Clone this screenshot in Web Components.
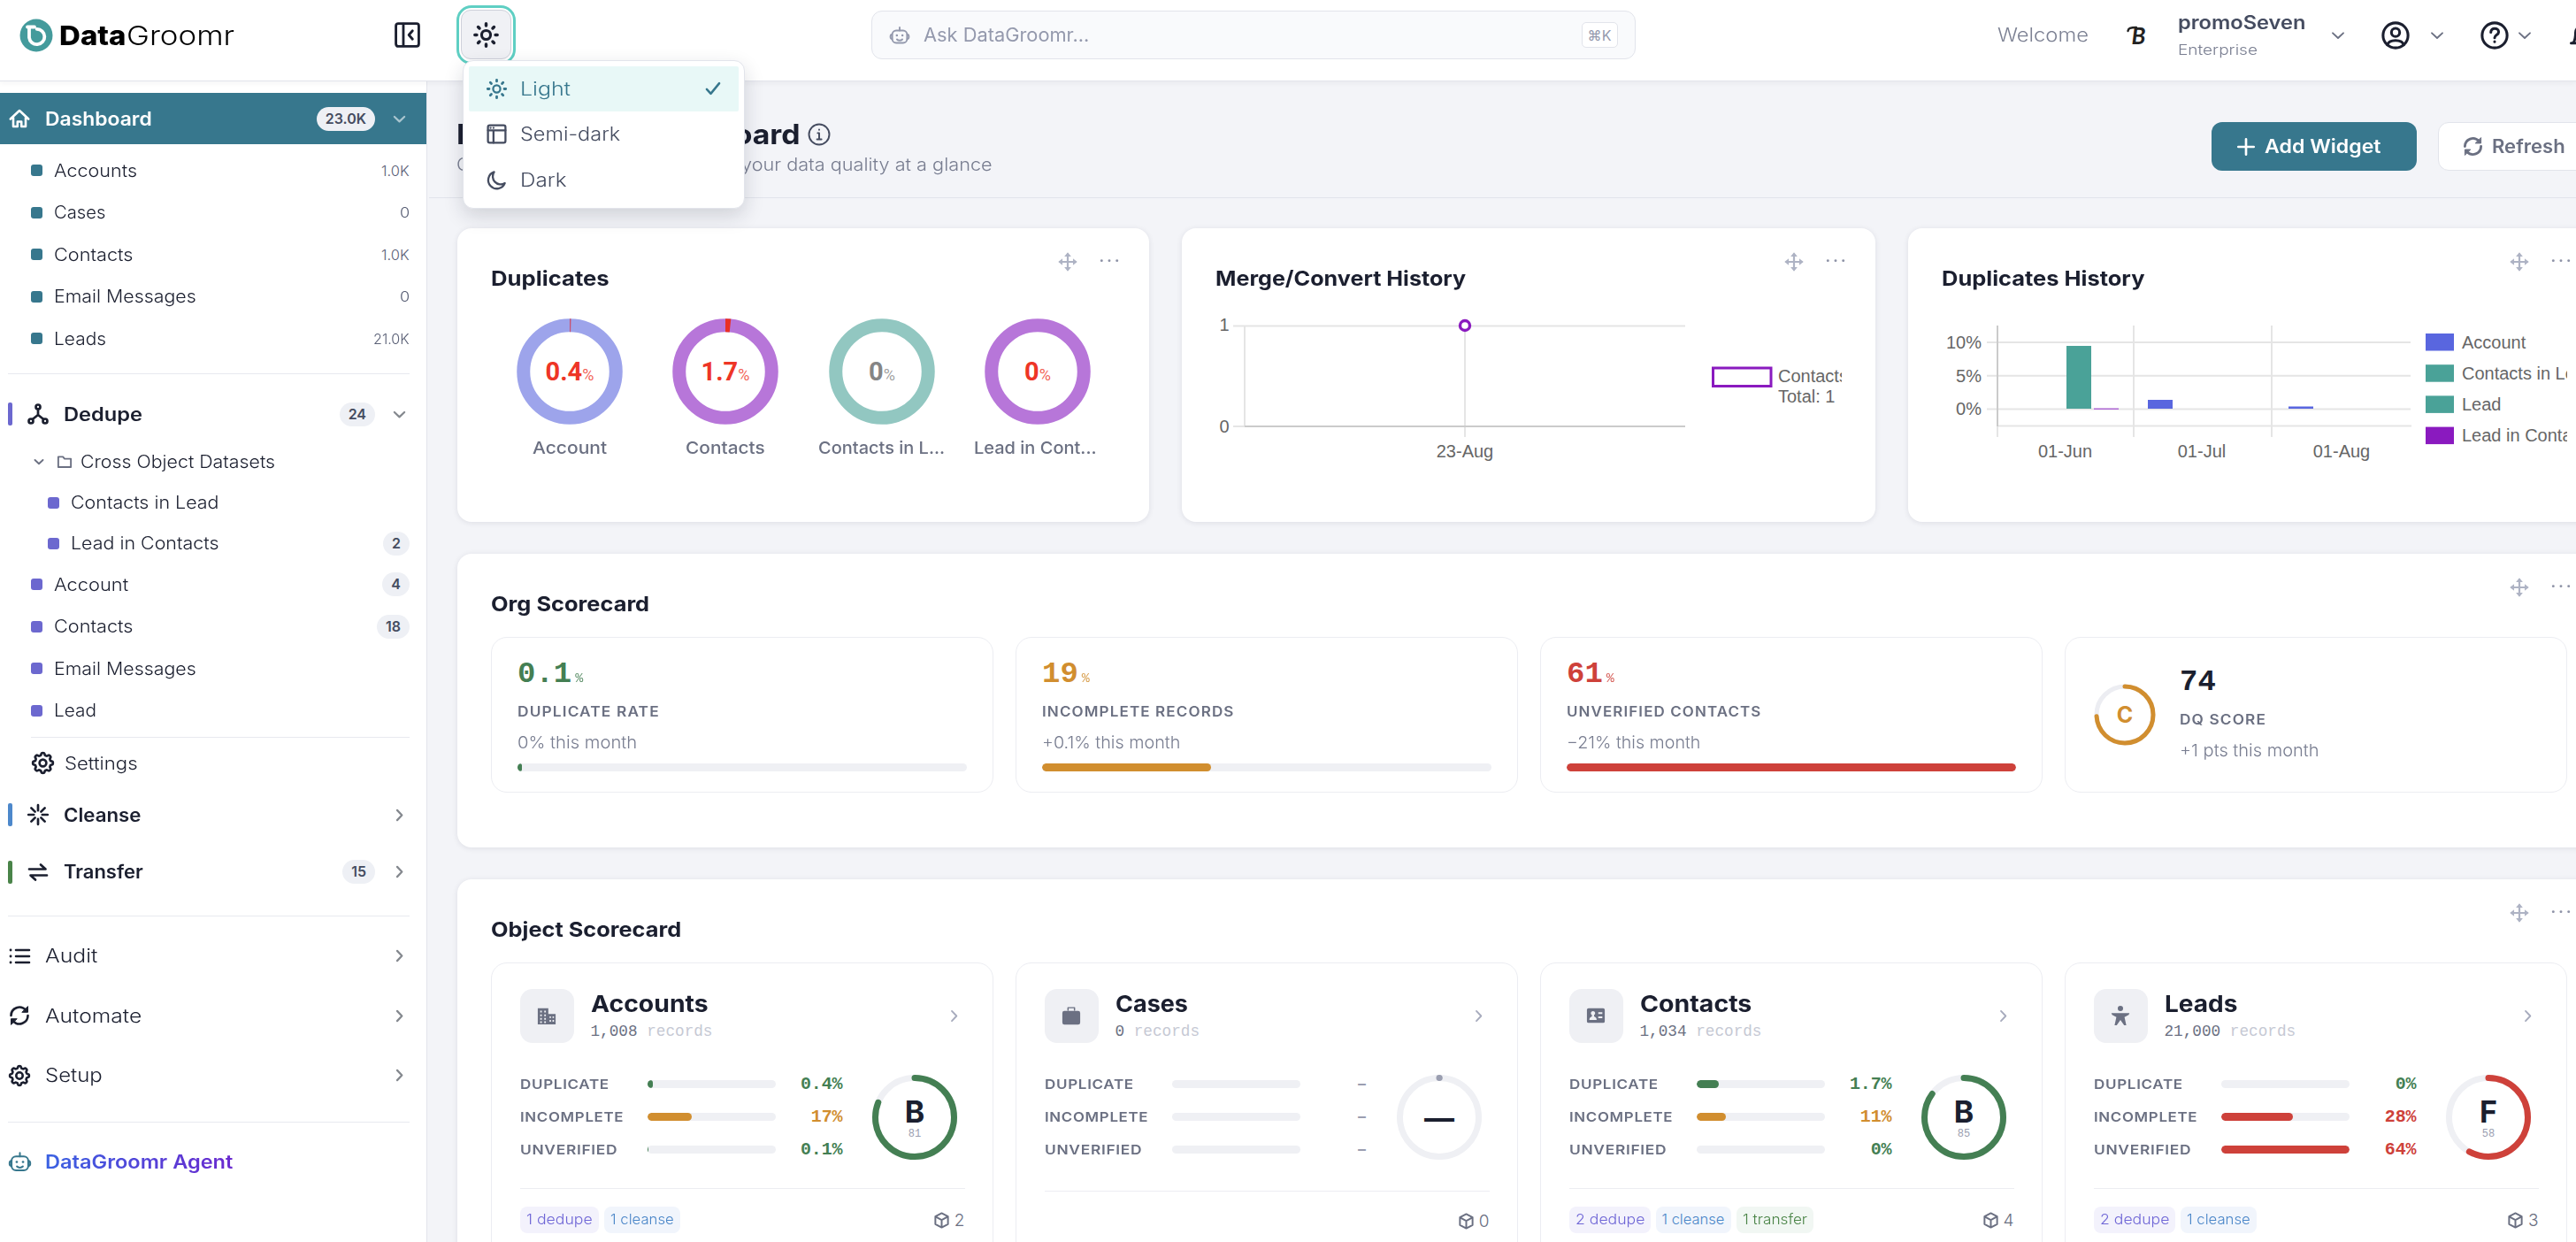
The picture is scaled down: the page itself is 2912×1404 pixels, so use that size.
<!DOCTYPE html>
<html lang="en">
<head>
<meta charset="utf-8">
<title>DataGroomr Dashboard</title>
<style>
  :root {
    --ink: #1b1f2f;
    --slate: #454c60;
    --muted: #6b7082;
    --soft: #787d90;
    --line: #e2e4eb;
    --pill: #eff0f4;
    --teal: #37778d;
    --violet: #6c68cf;
    --green: #447f53;
    --amber: #d18e2f;
    --red: #ce413a;
    --mono: "Liberation Mono", monospace;
  }
  html, body {
    margin: 0;
    height: 1404px;
    overflow: hidden;
  }
  body {
    font-family: Inter, "Open Sans", sans-serif;
    font-weight: 350;
    color: var(--ink);
    background: #f3f4f8;
  }
</style>
</head>
<body>
<dg-shell>
  <dg-topbar slot="top"></dg-topbar>
  <dg-sidebar slot="side">
    <nav-item kind="top" active h="58" icon="home" w="121" badge="23.0K" chev="down">Dashboard</nav-item>
    <nav-item kind="sub" h="47.5" mt="5.75" w="94" count="1.0K" cw="32">Accounts</nav-item>
    <nav-item kind="sub" h="47.5" w="58" count="0" cw="11">Cases</nav-item>
    <nav-item kind="sub" h="47.5" w="89" count="1.0K" cw="32">Contacts</nav-item>
    <nav-item kind="sub" h="47.5" w="161" count="0" cw="11">Email Messages</nav-item>
    <nav-item kind="sub" h="47.5" w="59" count="21.0K" cw="41">Leads</nav-item>
    <nav-rule mt="16"></nav-rule>
    <nav-item kind="group" h="58" mt="16" icon="network" bar="#6c68cf" w="89" badge="24" chev="down">Dedupe</nav-item>
    <nav-item kind="folder" h="46" mt="2" w="220">Cross Object Datasets</nav-item>
    <nav-item kind="nested" h="46" w="167">Contacts in Lead</nav-item>
    <nav-item kind="nested" h="46" w="167" badge="2">Lead in Contacts</nav-item>
    <nav-item kind="sub" violet h="47" w="84" badge="4">Account</nav-item>
    <nav-item kind="sub" violet h="47.5" w="89" badge="18">Contacts</nav-item>
    <nav-item kind="sub" violet h="47.5" w="161">Email Messages</nav-item>
    <nav-item kind="sub" violet h="47.5" w="48">Lead</nav-item>
    <nav-rule mt="6" inset></nav-rule>
    <nav-item kind="settings" h="58" icon="gear" w="83">Settings</nav-item>
    <nav-item kind="group" h="59" icon="burst" bar="#4d88cb" w="87" chev="right">Cleanse</nav-item>
    <nav-item kind="group" h="70" icon="transfer" bar="#4a8449" w="90" badge="15" chev="right">Transfer</nav-item>
    <nav-rule mt="14"></nav-rule>
    <nav-item kind="top" h="68" mt="11" icon="list" w="59" chev="right">Audit</nav-item>
    <nav-item kind="top" h="67" icon="sync" w="109" chev="right">Automate</nav-item>
    <nav-item kind="top" h="68" icon="gear" w="65" chev="right">Setup</nav-item>
    <nav-rule mt="18"></nav-rule>
    <nav-item kind="top" agent h="90" icon="robot" w="212">DataGroomr Agent</nav-item>
  </dg-sidebar>
  <page-header></page-header>
  <widget-grid>
    <widget-card heading="Duplicates" w="134">
      <donut-row>
        <donut-stat value="0.4" share="0.4" ring="#9da4eb" w="84">Account</donut-stat>
        <donut-stat value="1.7" share="1.7" ring="#b776d9" w="90">Contacts</donut-stat>
        <donut-stat value="0" ring="#92c7c1" off clip w="143">Contacts in L...</donut-stat>
        <donut-stat value="0" ring="#b776d9" clip w="139">Lead in Cont...</donut-stat>
      </donut-row>
    </widget-card>
    <widget-card heading="Merge/Convert History" w="283"><merge-chart></merge-chart></widget-card>
    <widget-card heading="Duplicates History" w="229"><history-chart></history-chart></widget-card>
    <widget-card wide heading="Org Scorecard" w="179">
      <card-row>
        <org-tile value="0.1" tone="green" label="DUPLICATE RATE" lw="161" w="135" fill="1">0% this month</org-tile>
        <org-tile value="19" tone="amber" label="INCOMPLETE RECORDS" lw="218" w="156" fill="37.6">+0.1% this month</org-tile>
        <org-tile value="61" tone="red" label="UNVERIFIED CONTACTS" lw="221" w="151" fill="100">−21% this month</org-tile>
        <org-tile value="74" grade="C" label="DQ SCORE" lw="98" w="158">+1 pts this month</org-tile>
      </card-row>
    </widget-card>
    <widget-card wide heading="Object Scorecard" w="215">
      <card-row>
        <object-card name="Accounts" w="133" icon="building" records="1,008" grade="B" score="81" tone="green" total="2"
          metrics="6 green 0.4%|50 amber 17%|1.5 green 0.1%">
          <tag-chip tone="dedupe" w="75">1 dedupe</tag-chip>
          <tag-chip tone="cleanse" w="72">1 cleanse</tag-chip>
        </object-card>
        <object-card name="Cases" w="82" icon="briefcase" records="0" grade="—" total="0"
          metrics="0 none –|0 none –|0 none –"></object-card>
        <object-card name="Contacts" w="126" icon="idcard" records="1,034" grade="B" score="85" tone="green" total="4"
          metrics="25 green 1.7%|33 amber 11%|0 green 0%">
          <tag-chip tone="dedupe" w="78">2 dedupe</tag-chip>
          <tag-chip tone="cleanse" w="71">1 cleanse</tag-chip>
          <tag-chip tone="transfer" w="73">1 transfer</tag-chip>
        </object-card>
        <object-card name="Leads" w="83" icon="person" records="21,000" grade="F" score="58" tone="red" total="3"
          metrics="0 green 0%|81 red 28%|145 red 64%">
          <tag-chip tone="dedupe" w="78">2 dedupe</tag-chip>
          <tag-chip tone="cleanse" w="72">1 cleanse</tag-chip>
        </object-card>
      </card-row>
    </widget-card>
  </widget-grid>
</dg-shell>

<script>
// ==== Helpers ==== //
const gearPath = () => {
  let d = '';
  for (let i = 0; i <= 96; i++) {
    const a = (i / 96) * Math.PI * 2;
    const r = 9.7 + 1.2 * Math.tanh(2.2 * Math.cos(a * 8));
    d += `${i ? 'L' : 'M'}${(12 + r * Math.cos(a)).toFixed(2)} ${(12 + r * Math.sin(a)).toFixed(2)}`;
  }
  return d + 'Z';
};

const rays = (from, to) => {
  let d = '';
  for (let i = 0; i < 8; i++) {
    const a = (i * Math.PI) / 4;
    d += `M${(12 + from * Math.cos(a)).toFixed(2)} ${(12 + from * Math.sin(a)).toFixed(2)}L${(12 + to * Math.cos(a)).toFixed(2)} ${(12 + to * Math.sin(a)).toFixed(2)}`;
  }
  return d;
};

const ICONS = {
  sun: `<circle cx="12" cy="12" r="3.9"/><path d="${rays(8.2, 9.8)}" stroke-width="2.7"/>`,
  moon: '<path d="M9.2 3.2a9.3 9.3 0 1 0 11.6 12.2A8.6 8.6 0 0 1 9.2 3.2Z"/>',
  layout: '<rect x="2.5" y="2.5" width="19" height="19" rx="2"/><path d="M2.5 8h19M8.5 8v13.5"/><path d="M5.3 5.3h.1M8.5 5.3h.1"/>',
  check: '<path d="m3.5 13 5.5 6L20.5 5"/>',
  panel: '<rect x="2" y="2" width="20" height="20" rx="2"/><path d="M8.5 2.5v19M16.500 8.3 13.3 12l3.200 3.700"/>',
  home: '<path d="M1.8 12.5 12 3l10.200 9.500M5 10.500V21h4.800v-5.500h4.400V21H19V10.500"/>',
  network: '<circle cx="12" cy="4" r="2.500"/><circle cx="4" cy="20" r="2.500"/><circle cx="20" cy="20" r="2.500"/><path d="M12 6.500V13l-6.300 5M12 13l6.300 5"/>',
  folder: '<path d="M2.5 4.500h7l2.500 3h9.500v12.500h-19Z"/>',
  gear: `<path d="${gearPath()}"/><circle cx="12" cy="12" r="3.700"/>`,
  burst: `<path d="${rays(4.8, 10.8)}"/>`,
  transfer: '<path d="M2 8.500h18.500L15 3.500M22 15.500H3.500L9 20.500"/>',
  list: '<path d="M8 5h15M8 12h15M8 19h15"/><path d="M2 5h.1M2 12h.1M2 19h.1" stroke-width="2.800"/>',
  sync: '<path d="M2.5 12A9.500 9.500 0 0 1 19 5.700M21.500 12A9.500 9.500 0 0 1 5 18.300"/><path d="M21.500 2v6.300h-6.300ZM2.500 22v-6.300h6.300Z" fill="currentColor" stroke-width="1"/>',
  robot: '<rect x="3.600" y="6.500" width="16.800" height="14" rx="4.500"/><path d="M12 6.500V3M3.400 11C1 11 1 16 3.400 16M20.600 11c2.400 0 2.400 5 0 5M9 16.500c1.500 1.600 4.500 1.600 6 0"/><path d="M8.800 12h.1M15.100 12h.1" stroke-width="2.400"/>',
  down: '<path d="m3 8 9 8.500L21 8"/>',
  right: '<path d="m8 3 8.500 9L8 21"/>',
  user: '<circle cx="12" cy="12" r="10.600"/><circle cx="12" cy="9.500" r="3.500"/><path d="M5 20c1.500-5 12.500-5 14 0"/>',
  help: '<circle cx="12" cy="12" r="10.600"/><path d="M8.800 9.300c0-4.300 6.600-4 6.600-.2 0 2.600-3.400 2.400-3.400 4.900M12 17.300v.2"/>',
  info: '<circle cx="12" cy="12" r="10.600"/><path d="M10.500 10.500H12v6.200M9.800 17h4.600M12 7v.1"/>',
  bell: '<path d="M2 19h20M4 18.500c2-2.500 2-6 2-9a6 6 0 0 1 12 0c0 3 0 6.500 2 9M10 22h4"/>',
  plus: '<path d="M12 2.500v19M2.500 12h19"/>',
  move: '<path d="M12 2.500v19M2.500 12h19"/><path d="M12 .3l4.200 5.200H7.800ZM12 23.700l4.200-5.200H7.800ZM.3 12l5.200-4.200v8.400ZM23.700 12l-5.200-4.200v8.400Z" fill="currentColor" stroke="none"/>',
  dots: '<g fill="currentColor" stroke="none"><circle cx="2.500" cy="10.500" r="1.600"/><circle cx="12" cy="10.500" r="1.600"/><circle cx="21.500" cy="10.500" r="1.600"/></g>',
  cube: '<path d="M12 1.800 21 6.500v11L12 22.200 3 17.500v-11ZM3.300 6.800 12 11.500l8.700-4.700M12 11.500v10.500"/>',
  building: '<g stroke="none" fill="currentColor"><path fill-rule="evenodd" d="M1 3h13v7h9v13H1ZM4 6v2.200h2V6Zm5 0v2.200h2V6ZM4 10.500v2.200h2v-2.200Zm5 0v2.200h2v-2.200ZM4 15v2.200h2V15Zm5 0v2.200h2V15Zm-5 4.200v2h2v-2Zm5 0v2h2v-2ZM15.500 13v2h1.800v-2Zm3.700 0v2H21v-2Zm-3.700 4.500v2h1.800v-2Zm3.700 0v2H21v-2Z"/></g>',
  briefcase: '<path d="M8 5.500V2.300h8v3.200" stroke-width="1.600"/><rect x="1" y="6.300" width="22" height="17" rx="2.500" fill="currentColor" stroke="none"/>',
  idcard: '<path stroke="none" fill="currentColor" fill-rule="evenodd" d="M3 3h18a2 2 0 0 1 2 2v14a2 2 0 0 1-2 2H3a2 2 0 0 1-2-2V5a2 2 0 0 1 2-2ZM8.500 6.500a2.600 2.600 0 0 0-1.300 4.900v1.800C5 14 4 15.200 4 17.500h9c0-2.300-1-3.500-3.200-4.300v-1.800A2.600 2.600 0 0 0 8.500 6.500ZM15 8v2.200h5V8Zm0 5v2.200h5V13Z"/>',
  person: '<g stroke="none" fill="currentColor"><circle cx="12" cy="3.300" r="3.300"/><path d="M.8 9h22.400l-1 2.200-5.200 2.600 2.200 10.200h-2.600L12 17.500 7.400 24H4.800L7 13.800l-5.200-2.600Z"/></g>',
};

const icon = (name, size, sw = 2) => `<dg-icon name="${name}" size="${size}" sw="${sw}"></dg-icon>`;
const fit = (w, text) => `<fit-text w="${w}">${text}</fit-text>`;

// Arc drawn clockwise from twelve o'clock
const arc = (c, r, sw, pct, color, cap = 'round') => {
  const len = 2 * Math.PI * r;
  return `<circle cx="${c}" cy="${c}" r="${r}" fill="none" stroke="${color}" stroke-width="${sw}" stroke-linecap="${cap}"
    stroke-dasharray="${(len * pct) / 100} ${len}" transform="rotate(-90 ${c} ${c})"/>`;
};

class DgElement extends HTMLElement {
  connectedCallback() {
    if (this.shadowRoot) return;
    this.attachShadow({ mode: 'open' });
    this.shadowRoot.innerHTML = this.render();
  }

  attr(name) {
    return this.getAttribute(name) || '';
  }
}

// ==== Shell ==== //
class DgShell extends DgElement {
  render() {
    return `
      <style>
        :host { display: grid; grid-template: 92px 1312px / 485px 2427px; width: 2912px; height: 1404px; overflow: hidden; }
        .top { grid-column: 1 / 3; position: relative; z-index: 2; }
        .main { overflow: hidden; }
      </style>
      <div class="top"><slot name="top"></slot></div>
      <slot name="side"></slot>
      <div class="main"><slot></slot></div>
    `;
  }
}

// ==== Icon ==== //
class DgIcon extends DgElement {
  render() {
    const size = this.attr('size');
    return `
      <style>
        :host { display: block; flex: none; width: ${size}px; height: ${size}px; }
        svg { display: block; overflow: visible; }
      </style>
      <svg width="${size}" height="${size}" viewBox="0 0 24 24" fill="none" stroke="currentColor"
        stroke-width="${this.attr('sw')}" stroke-linecap="round" stroke-linejoin="round">${ICONS[this.attr('name')]}</svg>
    `;
  }
}

// ==== Top bar ==== //
class DgTopbar extends DgElement {
  render() {
    return `
      <style>
        :host { display: block; height: 91px; background: #fff; border-bottom: 1px solid var(--line); box-shadow: 0 2px 6px rgba(30, 35, 60, .05); }
        .row { display: flex; align-items: center; height: 79px; width: 2940px; }
        .row > * { flex: none; }
        .logo { display: flex; align-items: center; gap: 7px; margin-left: 22px; width: 423px; color: #000; font-size: 30px; }
        .logo svg { margin-top: 1px; }
        .logo b { font-weight: 800; }
        .name { display: flex; gap: 0; }
        .theme { margin: 0 402px 0 39.5px; }
        .search { display: flex; align-items: center; box-sizing: border-box; width: 864px; height: 55px; padding: 0 19px; border: 1.5px solid var(--line); border-radius: 12px; background: #f9fafc; color: #9499ad; font-size: 21px; font-weight: 400; }
        .search fit-text { margin: 0 auto 0 15px; }
        kbd { box-sizing: border-box; width: 41px; height: 29px; display: grid; place-items: center; border: 1.5px solid var(--line); border-radius: 5px; background: #fff; font: 16px Inter, "DejaVu Sans", sans-serif; }
        .welcome { margin-left: 409px; width: 103px; font-size: 21px; font-weight: 300; color: #7c8193; }
        .brand { position: relative; margin-left: 43px; width: 22px; font: italic bold 26px Lato, sans-serif; color: #222; text-align: right; line-height: 30px; }
        .brand svg { position: absolute; left: 0; top: 4px; }
        .org { margin: 3px 0 0 36px; width: 144px; color: var(--slate); font-size: 21px; font-weight: 600; line-height: 30px; }
        .org small { display: block; font-size: 16.5px; font-weight: 350; color: var(--soft); }
        .chev { color: var(--muted); display: grid; place-items: center; width: 20px; }
      </style>
      <div class="row">
        <div class="logo">
          <svg width="38" height="38" viewBox="0 0 38 38"><circle cx="19" cy="19" r="18.500" fill="#449b9c"/>
            <path d="M8 11.500H18a7.700 7.700 0 1 1-7.700 8" fill="none" stroke="#fff" stroke-width="0"/>
            <path d="M9 9.500h8M11 10v11.500a8.700 8.700 0 1 0 8.700-9.700" fill="none" stroke="#fff" stroke-width="3.800" stroke-linecap="round"/></svg>
          <div class="name"><b>${fit(76, 'Data')}</b>${fit(122, 'Groomr')}</div>
        </div>
        ${icon('panel', 31, 2.2)}
        <theme-picker class="theme"></theme-picker>
        <div class="search">${icon('robot', 24, 1.9)}${fit(187, 'Ask DataGroomr...')}<kbd>⌘K</kbd></div>
        <div class="welcome">${fit(103, 'Welcome')}</div>
        <div class="brand"><svg width="12" height="8" fill="none" stroke="#222" stroke-width="2.400" stroke-linecap="round"><path d="M1.500 6C2 3 4 2 11 2"/></svg>B</div>
        <div class="org">${fit(144, 'promoSeven')}<small>${fit(90, 'Enterprise')}</small></div>
        <div class="chev" style="margin-left:27px">${icon('down', 16, 2.8)}</div>
        <span style="margin-left:39px">${icon('user', 32, 2.3)}</span>
        <div class="chev" style="margin-left:21px">${icon('down', 16, 2.8)}</div>
        <span style="margin-left:39px">${icon('help', 32, 2.3)}</span>
        <div class="chev" style="margin-left:8px">${icon('down', 16, 2.8)}</div>
        <span style="margin-left:40px">${icon('bell', 30, 2.4)}</span>
      </div>
    `;
  }
}

class ThemePicker extends DgElement {
  render() {
    return `
      <style>
        :host { display: block; position: relative; width: 67px; height: 67px; }
        .ring { box-sizing: border-box; width: 67px; height: 67px; border: 3.5px solid #5fcfc3; border-radius: 17px; padding: 2px; background: #fff; }
        .btn { box-sizing: border-box; height: 56px; border: 1.5px solid #cfd1da; border-radius: 11px; background: #f0f1f5; display: grid; place-items: center; }
        .menu { position: absolute; left: 7px; top: 61.5px; box-sizing: border-box; width: 319px; height: 168px; padding: 6px; background: #fff; border: 1px solid var(--line); border-radius: 12px; box-shadow: 0 8px 22px rgba(27, 31, 47, .16); color: var(--slate); font-size: 21px; }
        .opt { display: flex; align-items: center; gap: 14px; height: 51.5px; padding: 0 19px; }
        .on { background: #e8f8f7; color: var(--teal); border-radius: 2px; }
        .tick { margin-left: auto; }
      </style>
      <div class="ring"><div class="btn">${icon('sun', 31, 2.4)}</div></div>
      <div class="menu">
        <div class="opt on">${icon('sun', 25, 2.2)}${fit(57, 'Light')}<span class="tick">${icon('check', 20, 3)}</span></div>
        <div class="opt">${icon('layout', 25, 2.2)}${fit(113, 'Semi-dark')}</div>
        <div class="opt">${icon('moon', 25, 2.2)}${fit(53, 'Dark')}</div>
      </div>
    `;
  }
}

// ==== Sidebar ==== //
class DgSidebar extends DgElement {
  render() {
    return `
      <style>
        :host { display: block; box-sizing: border-box; width: 483px; padding-top: 13px; background: #fff; border-right: 1px solid var(--line); }
      </style>
      <slot></slot>
    `;
  }
}

class NavRule extends DgElement {
  render() {
    return `
      <style>
        :host { display: block; height: 1px; margin: ${this.attr('mt')}px 19px 0 9px; background: #e8e9ef; }
        :host([inset]) { margin-left: 35px; }
      </style>
    `;
  }
}

class NavItem extends DgElement {
  render() {
    const kind = this.attr('kind');
    const chev = this.attr('chev');
    const lead = {
      top: () => `<span class="ico">${icon(this.attr('icon'), this.attr('icon') === 'robot' ? 27 : 24, this.hasAttribute('agent') ? 1.8 : 2.6)}</span>`,
      group: () => `<i class="bar" style="background:${this.attr('bar')}"></i><span class="ico">${icon(this.attr('icon'), 24, 2.7)}</span>`,
      settings: () => `<span class="ico">${icon('gear', 25, 2.6)}</span>`,
      folder: () => `<span class="fold">${icon('down', 12, 3.8)}</span>${icon('folder', 18, 2.5)}`,
      sub: () => '<i class="dot"></i>',
      nested: () => '<i class="dot"></i>',
    }[kind]();
    return `
      <style>
        :host { display: flex; align-items: center; box-sizing: border-box; height: ${this.attr('h')}px; margin-top: ${this.attr('mt') || 0}px; padding: 0 19px 0 9px; font-size: 19.5px; }
        :host([kind="sub"]), :host([kind="settings"]) { padding-left: 35px; }
        :host([kind="nested"]) { padding-left: 54px; }
        :host([kind="folder"]) { padding-left: 38px; }
        :host([kind="top"]) { font-size: 21px; }
        :host([kind="group"]) { font-size: 21px; font-weight: 600; }
        :host([active]) { background: var(--teal); color: #fff; font-weight: 600; }
        :host([agent]) { --grad: linear-gradient(90deg, #3a62e2, #6a29cf); font-weight: 600; }
        .ico { width: 26px; display: grid; place-items: center; margin-right: 16px; }
        :host([agent]) .ico { color: var(--teal); }
        :host([agent]) .label { color: transparent; }
        :host([kind="settings"]) .ico { margin-right: 12px; }
        :host([kind="group"]) .ico { margin: 0 16px 0 16px; }
        .bar { width: 5px; height: 26px; border-radius: 2px; }
        .dot { width: 13px; height: 13px; border-radius: 3px; background: var(--teal); margin-right: 13px; }
        :host([violet]) .dot, :host([kind="nested"]) .dot { background: var(--violet); }
        .fold { margin-right: 14px; color: #8a8e9c; }
        :host([kind="folder"]) dg-icon { color: var(--muted); }
        :host([kind="folder"]) .label { margin-left: 9px; }
        .label { margin-right: auto; }
        .badge { box-sizing: border-box; height: 27px; min-width: 29px; padding: 0 10px; border-radius: 14px; background: #eef0f5; color: var(--slate); font-size: 16px; font-weight: 600; line-height: 27px; text-align: center; }
        .count { color: #5b6177; font-size: 16.5px; }
        .chev { width: 24px; margin-left: 15px; display: grid; place-items: center; color: #85898f; }
        :host([active]) .chev { color: #a9c5cf; }
      </style>
      ${lead}
      <span class="label"><fit-text w="${this.attr('w')}"><slot></slot></fit-text></span>
      ${this.attr('badge') ? `<span class="badge">${this.attr('badge')}</span>` : ''}
      ${this.attr('count') ? `<span class="count">${fit(this.attr('cw'), this.attr('count'))}</span>` : ''}
      ${chev ? `<span class="chev">${icon(chev, 15, 3.6)}</span>` : ''}
    `;
  }
}

// ==== Page header ==== //
class PageHeader extends DgElement {
  render() {
    return `
      <style>
        :host { display: grid; grid-template-columns: 1984px max-content; box-sizing: border-box; height: 132px; padding: 41px 0 0 31px; border-bottom: 1px solid var(--line); }
        h1 { display: flex; align-items: center; gap: 8px; margin: 0; font-size: 31px; font-weight: 700; line-height: 38px; }
        h1 dg-icon { color: var(--slate); }
        p { display: flex; gap: 5px; margin: 0; font-size: 20px; line-height: 30px; color: var(--soft); }
        .actions { display: flex; gap: 24px; margin-top: 5px; height: 55px; }
        button { display: flex; align-items: center; gap: 10px; box-sizing: border-box; height: 55px; border: 0; border-radius: 12px; font: 600 21px Inter, sans-serif; text-align: left; }
        .add { width: 232px; padding: 0 28px; background: var(--teal); color: #fff; }
        .refresh { width: 174px; padding: 0 27px; background: #fff; color: var(--muted); border: 1.5px solid var(--line); }
      </style>
      <div>
        <h1>${fit(389, 'DataGroomr Dashboard')}${icon('info', 26, 1.8)}</h1>
        <p>${fit(317, 'Overview of all org records and')}${fit(284, 'your data quality at a glance')}</p>
      </div>
      <div class="actions">
        <button class="add">${icon('plus', 22, 2.9)}${fit(131, 'Add Widget')}</button>
        <button class="refresh">${icon('sync', 23, 3)}${fit(83, 'Refresh')}</button>
      </div>
    `;
  }
}

// ==== Widgets ==== //
class WidgetGrid extends DgElement {
  render() {
    return `
      <style>
        :host { display: grid; grid-template-columns: 782px 784px 783px; grid-template-rows: 332px 332px 520px; gap: 36px 37px; padding: 34px 0 0 32px; }
      </style>
      <slot></slot>
    `;
  }
}

class WidgetCard extends DgElement {
  render() {
    return `
      <style>
        :host { display: block; box-sizing: border-box; padding: 0 38px; background: #fff; border-radius: 16px; box-shadow: 0 1px 6px rgba(27, 31, 60, .1); }
        :host([wide]) { grid-column: 1 / 4; }
        header { display: flex; justify-content: space-between; height: 94px; margin-right: -4px; }
        h2 { margin: 42px 0 0; font-size: 23px; font-weight: 700; line-height: 30px; }
        .tools { display: flex; gap: 25px; margin-top: 27px; color: #aeb3c4; }
        .tools :last-child { color: #8d92a6; }
      </style>
      <header>
        <h2>${fit(this.attr('w'), this.attr('heading'))}</h2>
        <div class="tools">${icon('move', 22, 2.4)}${icon('dots', 22)}</div>
      </header>
      <slot></slot>
    `;
  }
}

class DonutRow extends DgElement {
  render() {
    return `
      <style>:host { display: grid; grid-template-columns: repeat(4, 1fr); padding: 8px 0 0 1px; }</style>
      <slot></slot>
    `;
  }
}

class DonutStat extends DgElement {
  render() {
    const share = parseFloat(this.attr('share')) || 0;
    const color = this.hasAttribute('off') ? '#858585' : '#ee3526';
    return `
      <style>
        :host { display: flex; flex-direction: column; align-items: center; color: var(--muted); font-size: 19px; font-weight: 500; line-height: 24px; }
        text { font: bold 29px Roboto, sans-serif; }
        tspan { font-size: 18px; font-weight: 400; fill-opacity: .8; }
        .label { margin-top: 15px; }
        :host([clip]) .label { width: 144px; }
      </style>
      <svg width="120" height="120">
        <circle cx="60" cy="60" r="52.25" fill="none" stroke="${this.attr('ring')}" stroke-width="15"/>
        ${share ? arc(60, 52.25, 15, share, share < 1 ? '#c9516f' : '#e92f23', 'butt') : ''}
        <text x="60" y="70" text-anchor="middle" fill="${color}">${this.attr('value')}<tspan>%</tspan></text>
      </svg>
      <span class="label"><fit-text w="${this.attr('w')}"><slot></slot></fit-text></span>
    `;
  }
}

const CHART_CSS = `
  :host { display: block; }
  svg { display: block; overflow: hidden; }
  text { font: 20px "Liberation Sans", Arial, sans-serif; fill: #666; }
`;

class MergeChart extends DgElement {
  render() {
    return `
      <style>${CHART_CSS}</style>
      <svg width="708" height="180" fill="none" stroke="#e5e5e5" stroke-width="2">
        <path d="M20 16.5H531M33 16.5V130M282 16.5V142M20 130H33"/>
        <path d="M33 130H531" stroke="#cbcbcb"/>
        <circle cx="282" cy="16" r="5.5" fill="#fff" stroke="#8a1abf" stroke-width="3.4"/>
        <rect x="562.5" y="64" width="65.5" height="20.5" stroke="#8a1abf" stroke-width="3"/>
        <g stroke="none">
          <text x="15.500" y="22" text-anchor="end">1</text>
          <text x="15.500" y="136.500" text-anchor="end">0</text>
          <text x="282" y="165" text-anchor="middle">23-Aug</text>
          <text x="636" y="80">Contacts</text>
          <text x="636" y="103">Total: 1</text>
        </g>
      </svg>
    `;
  }
}

class HistoryChart extends DgElement {
  render() {
    const legend = [['Account', '#5966df'], ['Contacts in Lead', '#4aa298'], ['Lead', '#4aa298'], ['Lead in Contacts', '#8a1abf']];
    return `
      <style>${CHART_CSS}</style>
      <svg width="707" height="180" fill="none" stroke="#e5e5e5" stroke-width="2">
        <path d="M51 35H530M51 72.7H530M51 110.5H530M63 129.5H531M217 16V142M373 16V142M63 130V142"/>
        <path d="M63 16V130" stroke="#cbcbcb"/>
        <g stroke="none">
          <rect x="141" y="39" width="28" height="71" fill="#4aa298"/>
          <rect x="172" y="109.5" width="28" height="1.5" fill="#b069d6"/>
          <rect x="233" y="100" width="28" height="10" fill="#5966df"/>
          <rect x="392" y="107.5" width="28" height="2.5" fill="#5966df"/>
          <text x="45" y="42" text-anchor="end">10%</text>
          <text x="45" y="79.5" text-anchor="end">5%</text>
          <text x="45" y="117" text-anchor="end">0%</text>
          <text x="139.5" y="165" text-anchor="middle">01-Jun</text>
          <text x="294" y="165" text-anchor="middle">01-Jul</text>
          <text x="452" y="165" text-anchor="middle">01-Aug</text>
          ${legend.map(([name, color], i) => `
            <rect x="547" y="${25 + i * 35.2}" width="32" height="19.5" fill="${color}"/>
            <text x="588" y="${41.5 + i * 35.2}">${name}</text>`).join('')}
        </g>
      </svg>
    `;
  }
}

class CardRow extends DgElement {
  render() {
    return `
      <style>:host { display: grid; grid-template-columns: repeat(4, 568px); gap: 25px; }</style>
      <slot></slot>
    `;
  }
}

class OrgTile extends DgElement {
  render() {
    const grade = this.attr('grade');
    const tone = this.attr('tone');
    return `
      <style>
        :host { display: flex; box-sizing: border-box; height: 176px; padding: 21px 29px 0; border: 1.5px solid #ecedf2; border-radius: 18px; }
        :host([grade]) { padding: 30px 32px 0; gap: 27px; }
        .body { flex: 1; }
        .value { height: 40px; font: bold 34px/40px var(--mono); color: var(--${tone || 'ink'}); white-space: nowrap; }
        .value small { font-size: 15px; font-weight: 400; line-height: 1; opacity: .85; margin-left: 4px; }
        .label { margin-top: 11px; font-size: 15.5px; font-weight: 600; line-height: 24px; color: var(--muted); letter-spacing: 1px; }
        .sub { margin-top: 11px; font-size: 19px; line-height: 24px; color: var(--soft); }
        .track { margin-top: 11px; height: 9px; border-radius: 4.5px; background: var(--pill); overflow: hidden; }
        .track i { display: block; height: 9px; width: ${this.attr('fill') || 0}%; border-radius: 4.5px; background: var(--${tone}); }
        .ring { margin-top: 22px; }
        .ring text { font: bold 25px Inter, sans-serif; fill: var(--amber); }
      </style>
      ${grade ? `<svg class="ring" width="70" height="70"><circle cx="35" cy="35" r="32" fill="none" stroke="#ecedf2" stroke-width="5"/>
        ${arc(35, 32, 5, 74, '#d18e2f')}<text x="35" y="44" text-anchor="middle">${grade}</text></svg>` : ''}
      <div class="body">
        <div class="value">${this.attr('value')}${grade ? '' : '<small>%</small>'}</div>
        <div class="label">${fit(this.attr('lw'), this.attr('label'))}</div>
        <div class="sub"><fit-text w="${this.attr('w')}"><slot></slot></fit-text></div>
        ${grade ? '' : '<div class="track"><i></i></div>'}
      </div>
    `;
  }
}

class ObjectCard extends DgElement {
  render() {
    const names = [['DUPLICATE', 101], ['INCOMPLETE', 117], ['UNVERIFIED', 110]];
    const rows = this.attr('metrics').split('|').map((m) => m.split(' '));
    const score = this.attr('score');
    const empty = !score;
    const ring = empty ? arc(48, 44.5, 7, 0.1, '#9a9eb0') : arc(48, 44.5, 7, score, `var(--${this.attr('tone')})`);
    return `
      <style>
        :host { display: block; box-sizing: border-box; height: 420px; padding: 28.5px 31.5px 0; border: 1.5px solid #ecedf2; border-radius: 18px; --none: #9a9eb0; }
        .head { display: flex; align-items: center; height: 61px; }
        .tile { display: grid; place-items: center; width: 61px; height: 61px; margin-right: 19px; border-radius: 14px; background: var(--pill); color: var(--muted); }
        .name { font-size: 26px; font-weight: 700; line-height: 30px; }
        .rec { margin-top: 6px; font: 17.7px/20px var(--mono); color: var(--muted); }
        .rec span { color: #c6c9d4; }
        .open { margin-left: auto; width: 24px; display: grid; place-items: center; color: #a7abbd; }
        .stats { display: flex; align-items: center; gap: 33px; margin-top: 28.5px; }
        .rows { width: 365px; }
        .row { display: grid; grid-template-columns: 144px 145px 76px; align-items: center; height: 37px; font-size: 15px; font-weight: 600; color: var(--muted); letter-spacing: .6px; }
        .row b { font: bold 20px var(--mono); text-align: right; letter-spacing: -.1px; }
        .track { height: 9px; border-radius: 4.5px; background: var(--pill); overflow: hidden; }
        .track i { display: block; height: 9px; border-radius: 4.5px; }
        .grade { font: bold 34px Inter, sans-serif; fill: var(--ink); }
        .score { font: 12px var(--mono); fill: #9a9eb0; }
        footer { display: flex; align-items: center; gap: 6px; margin-top: ${empty ? 28 : 25}px; padding-top: ${empty ? 18 : 20}px; height: 30px; border-top: 1.5px solid #ecedf2; }
        .total { display: flex; align-items: center; gap: 5px; margin-left: auto; font-size: 19px; color: var(--muted); }
      </style>
      <div class="head">
        <div class="tile">${icon(this.attr('icon'), 22)}</div>
        <div>
          <div class="name">${fit(this.attr('w'), this.attr('name'))}</div>
          <div class="rec">${this.attr('records')} <span>records</span></div>
        </div>
        <div class="open">${icon('right', 15, 3)}</div>
      </div>
      <div class="stats">
        <div class="rows">
          ${rows.map(([fill, tone, value], i) => `
            <div class="row">${fit(names[i][1], names[i][0])}
              <span class="track"><i style="width:${fill}px;background:var(--${tone})"></i></span>
              <b style="color:var(--${tone})">${value}</b>
            </div>`).join('')}
        </div>
        <svg width="96" height="96">
          <circle cx="48" cy="48" r="44.5" fill="none" stroke="#eff0f4" stroke-width="7"/>${ring}
          <text class="grade" x="48" y="${empty ? 61 : 54}" text-anchor="middle">${this.attr('grade')}</text>
          <text class="score" x="48" y="70" text-anchor="middle">${score}</text>
        </svg>
      </div>
      <footer><slot></slot><span class="total">${icon('cube', 19, 2.5)}${this.attr('total')}</span></footer>
    `;
  }
}

class TagChip extends DgElement {
  render() {
    const [color, bg] = {
      dedupe: ['#6f66d6', '#f3f2fc'],
      cleanse: ['#4a86c8', '#f1f5fc'],
      transfer: ['#4a8447', '#f1f7f3'],
    }[this.attr('tone')];
    return `
      <style>
        :host { display: block; height: 30px; padding: 0 7px; border-radius: 8px; background: ${bg}; color: ${color}; font-size: 16.5px; line-height: 28px; }
      </style>
      <fit-text w="${this.attr('w')}"><slot></slot></fit-text>
    `;
  }
}

// Stretches its text sideways to a set width
class FitText extends DgElement {
  render() {
    return `
      <style>
        :host { display: block; flex: none; width: ${this.attr('w')}px; white-space: nowrap; }
        span { display: inline-block; transform-origin: 0 50%; background: var(--grad, none); -webkit-background-clip: text; background-clip: text; }
      </style>
      <span><slot></slot></span>
    `;
  }

  connectedCallback() {
    super.connectedCallback();
    const span = this.shadowRoot.querySelector('span');
    const width = span.offsetWidth;
    if (width) span.style.transform = `scaleX(${this.attr('w') / width})`;
  }
}

customElements.define('dg-shell', DgShell);
customElements.define('dg-icon', DgIcon);
customElements.define('dg-topbar', DgTopbar);
customElements.define('theme-picker', ThemePicker);
customElements.define('dg-sidebar', DgSidebar);
customElements.define('nav-rule', NavRule);
customElements.define('nav-item', NavItem);
customElements.define('page-header', PageHeader);
customElements.define('widget-grid', WidgetGrid);
customElements.define('widget-card', WidgetCard);
customElements.define('donut-row', DonutRow);
customElements.define('donut-stat', DonutStat);
customElements.define('merge-chart', MergeChart);
customElements.define('history-chart', HistoryChart);
customElements.define('card-row', CardRow);
customElements.define('org-tile', OrgTile);
customElements.define('object-card', ObjectCard);
customElements.define('tag-chip', TagChip);
// last, so every box around the text is already laid out when it measures
customElements.define('fit-text', FitText);
</script>
</body>
</html>
